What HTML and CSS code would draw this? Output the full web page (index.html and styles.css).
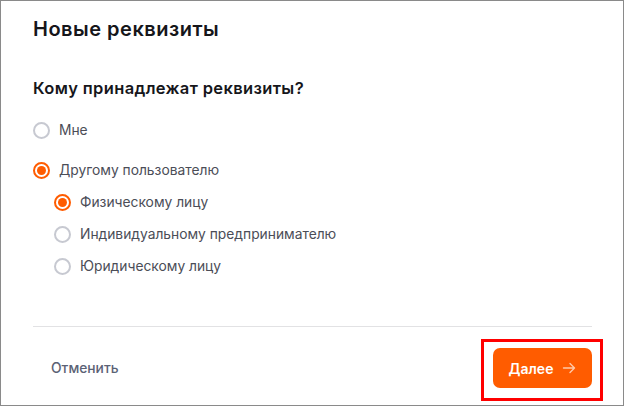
FILE: index.html
```html
<!DOCTYPE html>
<html lang="ru">
<head>
<meta charset="utf-8">
<link rel="stylesheet" href="styles.css">
</head>
<body>
<div class="frame">
  <div class="dialog">
    <h1 class="title">Новые реквизиты</h1>
    <h2 class="question">Кому принадлежат реквизиты?</h2>
    <div class="options">
      <label class="radio"><span class="dot"></span><span class="label">Мне</span></label>
      <label class="radio checked"><span class="dot"></span><span class="label">Другому пользователю</span></label>
      <div class="sub">
        <label class="radio checked"><span class="dot"></span><span class="label">Физическому лицу</span></label>
        <label class="radio"><span class="dot"></span><span class="label">Индивидуальному предпринимателю</span></label>
        <label class="radio"><span class="dot"></span><span class="label">Юридическому лицу</span></label>
      </div>
    </div>
    <div class="divider"></div>
    <div class="footer">
      <button class="cancel">Отменить</button>
      <button class="next">Далее
        <svg width="14" height="14" viewBox="0 0 14 14" fill="none" stroke="currentColor" stroke-width="1.4" stroke-linecap="round" stroke-linejoin="round"><path d="M1.5 7h11M8 2.5 12.5 7 8 11.5"/></svg>
      </button>
    </div>
  </div>
  <div class="highlight"></div>
</div>
</body>
</html>
```
FILE: styles.css
```css
* { box-sizing: border-box; }
html, body { margin: 0; padding: 0; background: #fff; }
body { font-family: Inter, "Noto Sans", sans-serif; }
.frame {
  position: relative;
  width: 624px;
  height: 406px;
  border: 1px solid #8a8a8a;
  background: #fff;
}
.dialog {
  padding: 16px 31px 0 32px;
  display: flex;
  flex-direction: column;
}
.title {
  margin: 0;
  font-size: 20px;
  line-height: 24px;
  font-weight: 600;
  color: #16161a;
  letter-spacing: 0.5px;
}
.question {
  margin: 36px 0 0;
  font-size: 16.5px;
  line-height: 22px;
  font-weight: 600;
  color: #16161a;
  letter-spacing: 0.35px;
}
.options {
  margin-top: 21px;
  display: flex;
  flex-direction: column;
  gap: 20px;
}
.sub {
  margin-top: -8px;
  padding-left: 21px;
  display: flex;
  flex-direction: column;
  gap: 12px;
}
.radio {
  display: flex;
  align-items: center;
  gap: 9px;
  height: 20px;
  font-size: 13.8px;
  color: #4b4d57;
}
.dot {
  width: 17px;
  height: 17px;
  border-radius: 50%;
  border: 2px solid #c7c9d1;
  flex: none;
  display: flex;
  align-items: center;
  justify-content: center;
}
.checked .dot { border-color: #ff5c00; }
.checked .dot::after {
  content: "";
  width: 9px;
  height: 9px;
  border-radius: 50%;
  background: #ff5c00;
}
.divider {
  margin-top: 50px;
  height: 1px;
  background: #e2e2e4;
}
.footer {
  margin-top: 21px;
  display: flex;
  justify-content: space-between;
  align-items: center;
}
.cancel {
  border: 0;
  background: none;
  padding: 0 0 0 18px;
  font-family: inherit;
  font-size: 13.8px;
  font-weight: 500;
  color: #5b6275;
}
.next {
  width: 99px;
  height: 40px;
  border: 0;
  border-radius: 7px;
  background: #ff5c00;
  color: #fff;
  font-family: inherit;
  font-size: 14px;
  font-weight: 600;
  display: flex;
  align-items: center;
  justify-content: center;
  gap: 9px;
  padding: 0;
}
.next svg { color: #ffc9a8; }
.highlight {
  position: absolute;
  left: 480px;
  top: 338px;
  width: 122px;
  height: 62px;
  border: 3px solid #ff0000;
}
```
